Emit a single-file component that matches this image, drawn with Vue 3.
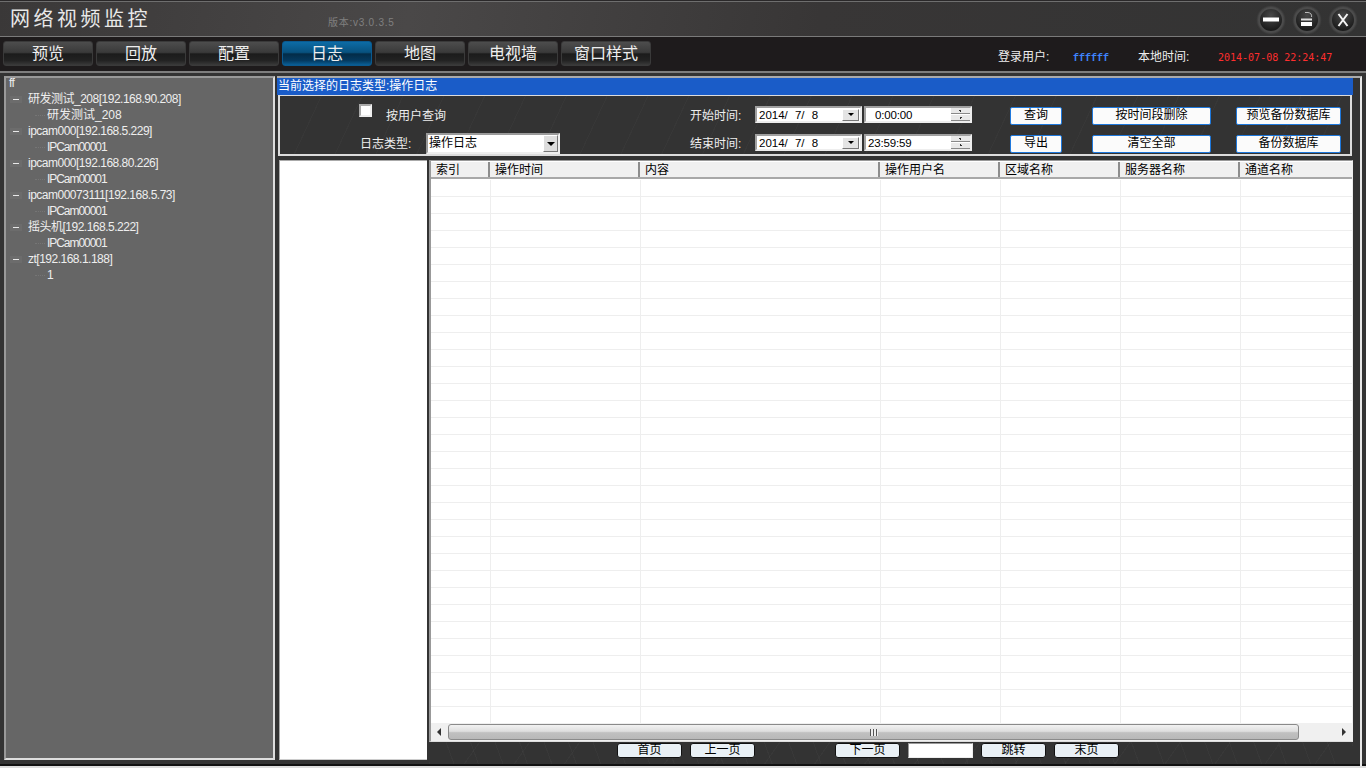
<script setup>
const tabs = ['预览', '回放', '配置', '日志', '地图', '电视墙', '窗口样式']
const tree = [
  { name: '研发测试_208[192.168.90.208]', child: '研发测试_208', cjk: true },
  { name: 'ipcam000[192.168.5.229]', child: 'IPCam00001' },
  { name: 'ipcam000[192.168.80.226]', child: 'IPCam00001' },
  { name: 'ipcam00073111[192.168.5.73]', child: 'IPCam00001' },
  { name: '摇头机[192.168.5.222]', child: 'IPCam00001' },
  { name: 'zt[192.168.1.188]', child: '1' }
]
const cols = [
  { t: '索引', w: 60, h: 59 },
  { t: '操作时间', w: 150, h: 150 },
  { t: '内容', w: 240, h: 240 },
  { t: '操作用户名', w: 120, h: 120 },
  { t: '区域名称', w: 120, h: 120 },
  { t: '服务器名称', w: 120, h: 120 },
  { t: '通道名称', w: 112, h: 113 }
]
const rows = Array.from({ length: 33 }, (_, i) => i)
</script>

<template>
  <div class="app">
    <header class="titlebar">
      <h1 class="title">网络视频监控</h1>
      <span class="version">版本:v3.0.3.5</span>
      <div class="winbtns">
        <button class="winbtn">
          <svg width="18" height="18" viewBox="0 0 18 18"><rect x="1" y="6.5" width="16" height="4" fill="#fff" /></svg>
        </button>
        <button class="winbtn">
          <svg width="18" height="18" viewBox="0 0 18 18">
            <path d="M7 1.5 H10 Q14 2 13.6 6" fill="none" stroke="#bbb" stroke-width="1" />
            <rect x="3" y="7.5" width="11" height="2" fill="#ddd" />
            <rect x="3" y="11" width="11" height="4" fill="#fff" />
          </svg>
        </button>
        <button class="winbtn">
          <svg width="18" height="18" viewBox="0 0 18 18"><path d="M4.5 3 L13.5 15 M13.5 3 L4.5 15" stroke="#f4f4f4" stroke-width="2" fill="none" /></svg>
        </button>
      </div>
    </header>

    <nav class="navbar">
      <div class="tabs">
        <button v-for="t in tabs" :key="t" class="tab" :class="{ active: t === '日志' }">{{ t }}</button>
      </div>
      <div class="status">
        <span class="s-label">登录用户:</span>
        <span class="s-user">ffffff</span>
        <span class="s-label">本地时间:</span>
        <span class="s-time">2014-07-08 22:24:47</span>
      </div>
    </nav>

    <main class="main">
      <aside class="tree">
        <div class="node root">ff</div>
        <template v-for="n in tree" :key="n.name">
          <div class="node parent"><span class="minus"></span>{{ n.name }}</div>
          <div class="node child" :class="{ cjk: n.cjk }"><span class="dots"></span>{{ n.child }}</div>
        </template>
      </aside>

      <section class="content">
        <div class="caption">当前选择的日志类型:操作日志</div>
        <div class="filter">
          <div class="frow">
            <div class="checkcell"><span class="check"></span><span class="lbl">按用户查询</span></div>
            <span class="lbl datelbl">开始时间:</span>
            <div class="date"><span>2014/ 7/ 8</span><i class="drop"></i></div>
            <div class="time indent"><span>0:00:00</span><i class="spin"></i></div>
            <button class="fbtn b1">查询</button>
            <button class="fbtn b2">按时间段删除</button>
            <button class="fbtn b3">预览备份数据库</button>
          </div>
          <div class="frow">
            <div class="typecell">
              <span class="lbl typelbl">日志类型:</span>
              <div class="combo"><span>操作日志</span><i class="drop large"></i></div>
            </div>
            <span class="lbl datelbl">结束时间:</span>
            <div class="date"><span>2014/ 7/ 8</span><i class="drop"></i></div>
            <div class="time"><span>23:59:59</span><i class="spin"></i></div>
            <button class="fbtn b1">导出</button>
            <button class="fbtn b2">清空全部</button>
            <button class="fbtn b3">备份数据库</button>
          </div>
        </div>

        <div class="lower">
          <div class="list"></div>
          <div class="tablewrap">
            <div class="table">
              <div class="thead">
                <div v-for="c in cols" :key="c.t" class="th" :style="{ width: c.h + 'px' }">{{ c.t }}</div>
              </div>
              <div class="tbody">
                <div v-for="r in rows" :key="r" class="tr">
                  <div v-for="c in cols" :key="c.t" class="td" :style="{ width: c.w + 'px' }"></div>
                </div>
              </div>
              <div class="hscroll">
                <span class="arrow left"></span>
                <div class="thumb"><span class="grip"></span></div>
                <span class="arrow right"></span>
              </div>
            </div>
            <div class="pager">
              <button class="pbtn">首页</button>
              <button class="pbtn">上一页</button>
              <button class="pbtn gap">下一页</button>
              <input class="pinput" />
              <button class="pbtn">跳转</button>
              <button class="pbtn">末页</button>
            </div>
          </div>
        </div>
      </section>
    </main>
  </div>
</template>

<style>
html, body { margin: 0; background: #333; overflow: hidden; }
</style>

<style scoped>
.app {
  width: 1366px;
  height: 768px;
  display: flex;
  flex-direction: column;
  overflow: hidden;
  font-family: "Liberation Sans", "Noto Sans CJK SC", sans-serif;
  font-size: 12px;
  color: #eee;
  background: #2a2829;
}
button { font-family: inherit; padding: 0; cursor: default; }

.titlebar {
  height: 34px;
  flex: none;
  display: flex;
  align-items: center;
  margin-top: 1px;
  border-top: 1px solid #6e6e6e;
  border-bottom: 1px solid #7a7a7a;
  padding-left: 10px;
  background: linear-gradient(100deg, #3a3838 0%, #4a4848 30%, #383636 60%, #333 100%);
}
.title {
  margin: -2px 0 0;
  font-size: 20px;
  font-weight: 400;
  letter-spacing: 3.5px;
  color: #e8e8e8;
  font-family: "Noto Sans CJK SC", sans-serif;
  line-height: 28px;
}
.version {
  margin-left: 177px;
  margin-top: 5px;
  font-size: 10px;
  letter-spacing: 0.75px;
  color: #808080;
  white-space: nowrap;
}
.winbtns {
  margin-left: auto;
  margin-right: 10px;
  margin-top: 2px;
  display: flex;
  gap: 10px;
}
.winbtn {
  width: 26px;
  height: 26px;
  border-radius: 50%;
  border: 2px solid #4c4c4c;
  background: radial-gradient(circle at 50% 30%, #484848, #1c1c1c 75%);
  box-shadow: 0 0 2px #666;
  display: flex;
  align-items: center;
  justify-content: center;
  box-sizing: border-box;
}
.winbtn svg { flex: none; }

.navbar {
  height: 30px;
  flex: none;
  display: flex;
  background: #1e1b1c;
  border-bottom: 2px solid #7e7e7e;
  padding-left: 3px;
  padding-top: 4px;
}
.tabs { display: flex; gap: 3px; height: 25px; }
.tab {
  width: 90px;
  height: 25px;
  padding-bottom: 3px;
  border: 1px solid #3a3a3a;
  border-radius: 3px;
  color: #eee;
  font-size: 16px;
  line-height: 20px;
  font-family: "Noto Sans CJK SC", sans-serif;
  background: linear-gradient(#4d4d4d 0%, #3a3a3a 45%, #1b1b1b 52%, #222 80%, #3a3a3a 100%);
}
.tab.active {
  border-color: #0a5a90;
  background: linear-gradient(#0d6ca6 0%, #08527f 45%, #032c48 52%, #04395e 80%, #0a5f97 100%);
}
.status {
  margin-left: 347px;
  padding-top: 6px;
  display: flex;
  align-items: baseline;
  height: 18px;
}
.s-label { color: #eee; font-size: 12px; white-space: nowrap; width: 53px; flex: none; }
.s-user {
  margin-left: 22px;
  width: 65px;
  font-family: "Liberation Mono", monospace;
  font-weight: 700;
  font-size: 10px;
  color: #3f86ff;
}
.s-time {
  margin-left: 27px;
  font-family: "DejaVu Sans Mono", monospace;
  font-size: 10px;
  color: #ff2e2e;
  white-space: nowrap;
}

.main {
  flex: 1;
  min-height: 0;
  display: flex;
  padding: 3px 0 0 4px;
  gap: 2px;
  background: #333;
  border-bottom: 2px solid #ddd;
  box-shadow: inset 0 -2px 0 #111;
}

.tree {
  width: 271px;
  height: 684px;
  box-sizing: border-box;
  background: #666;
  border: 2px solid #999;
  border-right-color: #ddd;
  border-bottom-color: #ddd;
  flex: none;
}
.node { height: 16px; line-height: 16px; letter-spacing: -0.5px; white-space: nowrap; position: relative; color: #eee; }
.root { padding-left: 3px; margin-top: -3px; }
.parent { padding-left: 22px; }
.child { padding-left: 41px; letter-spacing: -1.05px; }
.child.cjk { letter-spacing: 0; }
.minus {
  position: absolute;
  left: 7px;
  top: 8px;
  width: 6px;
  height: 1px;
  background: #e8e8e8;
  box-shadow: 0 0 0 3px rgba(120, 120, 120, 0.35);
}
.dots {
  position: absolute;
  left: 29px;
  top: 8px;
  width: 10px;
  border-top: 1px dotted #757575;
}

.content {
  width: 1085px;
  flex: none;
  box-sizing: border-box;
  border-top: 2px solid #aaa;
  border-right: 2px solid #e6e6e6;
  padding-right: 7px;
  display: flex;
  flex-direction: column;
}
.caption {
  height: 17px;
  line-height: 17px;
  background: #1a5cc8;
  color: #fff;
  font-size: 12px;
  padding-left: 1px;
  flex: none;
}
.filter {
  margin-left: 1px;
  margin-right: 1px;
  height: 61px;
  box-sizing: border-box;
  flex: none;
  border: 2px solid #dcdcdc;
  border-top-width: 1px;
  background:
    repeating-linear-gradient(115deg, rgba(255,255,255,0.02) 0 1px, transparent 1px 37px),
    #333;
  padding-top: 10px;
  display: flex;
  flex-direction: column;
  gap: 8px;
}
.frow { display: flex; align-items: center; height: 20px; }
.lbl { color: #eee; white-space: nowrap; font-size: 12px; margin-top: -3px; }
.checkcell { width: 410px; padding-left: 79px; box-sizing: border-box; display: flex; align-items: center; flex: none; }
.check {
  width: 13px;
  height: 13px;
  background: #fff;
  box-sizing: border-box;
  border: 2px solid #aaa;
  border-right-color: #eee;
  border-bottom-color: #eee;
  margin-top: -11px;
  flex: none;
}
.checkcell .lbl { margin-left: 14px; }
.typecell { width: 410px; padding-left: 80px; box-sizing: border-box; display: flex; align-items: center; flex: none; }
.typelbl { width: 66px; flex: none; }
.combo {
  width: 134px;
  height: 21px;
  box-sizing: border-box;
  background: #fff;
  border: 2px solid #9a9a9a;
  border-right-color: #eee;
  border-bottom-color: #eee;
  color: #000;
  line-height: 17px;
  padding-left: 1px;
  margin-top: -1px;
  display: flex;
  justify-content: space-between;
}
.datelbl { width: 65px; flex: none; }
.date, .time {
  height: 17px;
  box-sizing: border-box;
  background: #fff;
  border: 2px solid #a0a0a0;
  border-right-color: #eee;
  border-bottom-color: #eee;
  color: #000;
  line-height: 14px;
  font-size: 11.5px;
  display: flex;
  justify-content: space-between;
  align-items: center;
  padding-left: 2px;
  white-space: nowrap;
  flex: none;
  margin-top: -3px;
}
.date { width: 107px; word-spacing: 4px; }
.time { width: 108px; margin-left: 2px; letter-spacing: -0.15px; }
.time.indent { padding-left: 9px; }
.drop {
  width: 17px;
  height: 12px;
  background: #e4e4e4;
  border: 1px solid #fff;
  border-right-color: #777;
  border-bottom-color: #777;
  box-sizing: border-box;
  position: relative;
  flex: none;
  margin-right: 1px;
}
.drop::after {
  content: "";
  position: absolute;
  left: 5px;
  top: 3px;
  border-left: 3px solid transparent;
  border-right: 3px solid transparent;
  border-top: 3px solid #000;
}
.drop.large { width: 15px; height: 17px; background: #ddd; margin-right: 0; }
.drop.large::after { left: 3px; top: 6px; border-left-width: 4px; border-right-width: 4px; border-top-width: 4px; }
.spin {
  width: 19px;
  height: 13px;
  flex: none;
  background:
    radial-gradient(circle at 50% 2.5px, #333 0 1px, transparent 1px),
    radial-gradient(circle at 50% 9.5px, #333 0 1px, transparent 1px),
    linear-gradient(#e8e8e8 0 5px, #888 5px 6px, #fff 6px 7px, #e8e8e8 7px 12px, #888 12px 13px);
}
.fbtn {
  height: 18px;
  background: #fbfbfb;
  border: 1.5px solid #1e78dc;
  border-radius: 2px;
  color: #000;
  font-size: 12px;
  line-height: 15px;
  flex: none;
  margin-top: -1px;
}
.b1 { width: 52px; margin-left: 38px; }
.b2 { width: 119px; margin-left: 30px; }
.b3 { width: 105px; margin-left: 25px; }

.lower {
  flex: 1;
  min-height: 0;
  display: flex;
  gap: 2px;
  margin-top: 4px;
}
.list {
  margin-left: 2px;
  width: 148px;
  height: 600px;
  box-sizing: border-box;
  background: #fff;
  flex: none;
  border-top: 1px solid #aaa;
  border-left: 1px solid #aaa;
  border-bottom: 1px solid #ccc;
}
.tablewrap { width: 924px; flex: none; display: flex; flex-direction: column; }
.table {
  height: 582px;
  box-sizing: border-box;
  background: #fff;
  border-top: 1px solid #999;
  border-left: 2px solid #999;
  border-bottom: 1px solid #ddd;
  border-right: 1px solid #eee;
  display: flex;
  flex-direction: column;
  overflow: hidden;
  flex: none;
}
.thead {
  display: flex;
  height: 18px;
  flex: none;
  background: #f0f0f0;
  border-bottom: 2px solid #a8a8a8;
  border-top: 1px solid #fff;
  box-sizing: border-box;
}
.th {
  box-sizing: border-box;
  color: #000;
  font-size: 12px;
  line-height: 16px;
  height: 15px;
  padding-left: 5px;
  border-right: 2px solid #8c8c8c;
  flex: none;
  white-space: nowrap;
}
.th:last-child { border-right: none; }
.tbody { flex: 1; min-height: 0; overflow: hidden; padding-top: 1px; }
.tr { display: flex; height: 17px; box-sizing: border-box; border-bottom: 1px solid #eee; }
.td { box-sizing: border-box; border-right: 1px solid #eee; flex: none; height: 17px; }
.td:last-child { border-right: none; }
.hscroll {
  height: 18px;
  flex: none;
  background: #f0f0f0;
  display: flex;
  align-items: center;
}
.arrow { width: 17px; height: 18px; flex: none; position: relative; }
.arrow::after {
  content: "";
  position: absolute;
  top: 5px;
  border-top: 4px solid transparent;
  border-bottom: 4px solid transparent;
}
.arrow.left::after { left: 6px; border-right: 4px solid #333; }
.arrow.right { margin-left: auto; }
.arrow.right::after { left: 7px; border-left: 4px solid #333; }
.thumb {
  width: 851px;
  height: 16px;
  box-sizing: border-box;
  border: 1px solid #8a8a8a;
  border-radius: 3px;
  background: linear-gradient(#f2f2f2 0%, #dedede 45%, #c0c0c0 55%, #b8b8b8 100%);
  display: flex;
  align-items: center;
  justify-content: center;
  flex: none;
}
.grip {
  width: 8px;
  height: 7px;
  background: repeating-linear-gradient(90deg, #555 0 1px, #eee 1px 3px);
}
.pager {
  flex: 1;
  display: flex;
  align-items: flex-start;
  padding-top: 1px;
  padding-left: 188px;
  gap: 8px;
  box-sizing: border-box;
  border-bottom: 2px solid #111;
  background:
    repeating-linear-gradient(70deg, rgba(255,255,255,0.025) 0 1px, transparent 1px 23px),
    repeating-linear-gradient(125deg, rgba(255,255,255,0.025) 0 1px, transparent 1px 41px),
    #333;
}
.pbtn {
  width: 65px;
  height: 15px;
  box-sizing: border-box;
  background: #e9f0f5;
  border: 1px solid #111;
  border-radius: 3px;
  color: #000;
  font-size: 12px;
  line-height: 13px;
  flex: none;
}
.pbtn.gap { margin-left: 72px; }
.pinput {
  width: 65px;
  height: 15px;
  box-sizing: border-box;
  background: #fff;
  border: 1px solid #999;
  border-right-color: #eee;
  border-bottom-color: #eee;
  padding: 0;
  outline: none;
  flex: none;
}
</style>
